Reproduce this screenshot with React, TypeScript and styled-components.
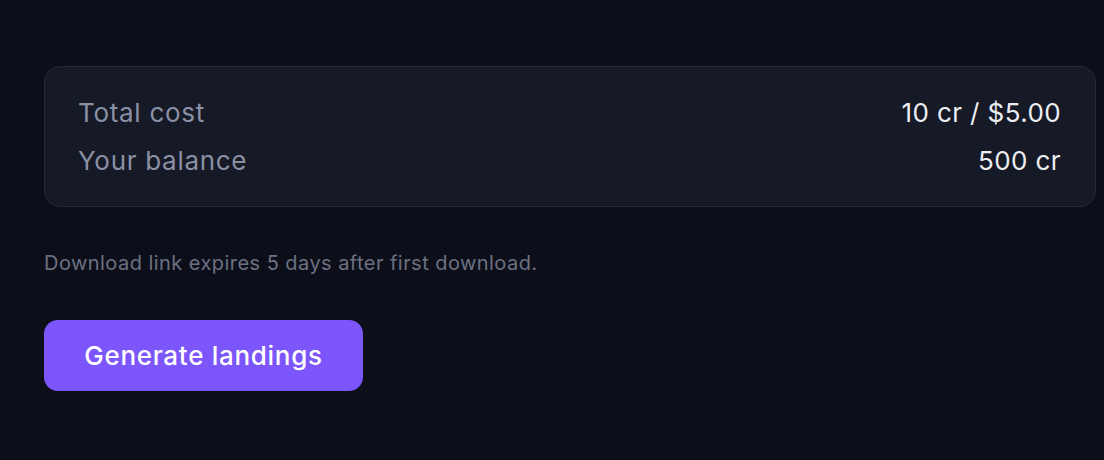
import React from 'react';
import styled, { createGlobalStyle } from 'styled-components';

const GlobalStyle = createGlobalStyle`
  html, body {
    margin: 0;
    padding: 0;
    background: #0c0e1a;
  }
  body {
    font-family: Inter, 'Noto Sans', sans-serif;
  }
`;

const Page = styled.div`
  width: 1104px;
  height: 460px;
  box-sizing: border-box;
  padding: 66px 8px 0 44px;
  display: flex;
  flex-direction: column;
  align-items: flex-start;
`;

const Summary = styled.div`
  width: 100%;
  box-sizing: border-box;
  padding: 27px 34px 28px 33px;
  background: #161926;
  border: 1px solid #252938;
  border-radius: 16px;
  display: flex;
  flex-direction: column;
  gap: 12px;
`;

const Row = styled.div`
  display: flex;
  justify-content: space-between;
  align-items: center;
  height: 36px;
  font-size: 26px;
`;

const Label = styled.span`
  color: #8b90a4;
  letter-spacing: 0.7px;
`;

const Value = styled.span`
  color: #eceef3;
  letter-spacing: 0.4px;
`;

const Note = styled.p`
  margin: 42px 0 0 0;
  font-size: 20px;
  line-height: 28px;
  color: #6c7181;
  letter-spacing: 0.45px;
`;

const Button = styled.button`
  margin-top: 43px;
  width: 319px;
  height: 71px;
  border: none;
  border-radius: 14px;
  background: #7c55fb;
  color: #ffffff;
  font-family: Inter, 'Noto Sans', sans-serif;
  font-size: 26px;
  font-weight: 500;
  letter-spacing: 0.7px;
  cursor: pointer;
`;

const rows = [
  { label: 'Total cost', value: '10 cr / $5.00' },
  { label: 'Your balance', value: '500 cr' },
];

export default function App() {
  return (
    <>
      <GlobalStyle />
      <Page>
        <Summary>
          {rows.map((r) => (
            <Row key={r.label}>
              <Label>{r.label}</Label>
              <Value>{r.value}</Value>
            </Row>
          ))}
        </Summary>
        <Note>Download link expires 5 days after first download.</Note>
        <Button>Generate landings</Button>
      </Page>
    </>
  );
}
